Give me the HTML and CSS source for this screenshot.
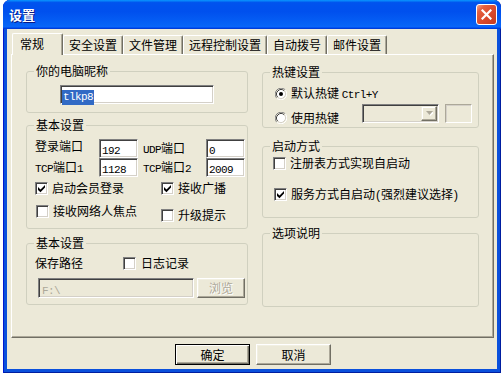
FILE: index.html
```html
<!DOCTYPE html>
<html>
<head>
<meta charset="utf-8">
<title>设置</title>
<link rel="stylesheet" href="styles.css">
</head>
<body>
<div class="win">
  <div class="titlebar">
    <span class="title">设置</span>
    <span class="close"><svg width="11" height="11" viewBox="0 0 11 11"><path d="M1.5 1.5L9.5 9.5M9.5 1.5L1.5 9.5" stroke="#fff" stroke-width="2.2" stroke-linecap="square"/></svg></span>
  </div>
  <div class="client">
    <div class="tabs">
      <div class="tab sel">常规</div>
      <div class="tab">安全设置</div>
      <div class="tab">文件管理</div>
      <div class="tab">远程控制设置</div>
      <div class="tab">自动拨号</div>
      <div class="tab">邮件设置</div>
    </div>
    <div class="panel">
      <div class="col col-l">
        <fieldset class="grp g-nick">
          <legend>你的电脑昵称</legend>
          <div class="edit nick"><span class="hl l">tlkp8</span></div>
        </fieldset>

        <fieldset class="grp g-basic">
          <legend>基本设置</legend>
          <div class="ports">
            <span class="plab up">登录端口</span>
            <div class="edit port"><span class="l">192</span></div>
            <span class="plab plab2"><span class="l">UDP</span>端口</span>
            <div class="edit port"><span class="l">0</span></div>
            <span class="plab"><span class="l">TCP</span>端口<span class="l">1</span></span>
            <div class="edit port"><span class="l">1128</span></div>
            <span class="plab plab2"><span class="l">TCP</span>端口<span class="l">2</span></span>
            <div class="edit port"><span class="l">2009</span></div>
          </div>
          <div class="crow r3">
            <div class="chk c-left"><span class="box"><svg width="11" height="11" viewBox="0 0 11 11"><path d="M2 4L2 7L4.5 9.3L9 4.6L9 2L4.5 6.5Z" fill="#000"/></svg></span>启动会员登录</div>
            <div class="chk"><span class="box"><svg width="11" height="11" viewBox="0 0 11 11"><path d="M2 4L2 7L4.5 9.3L9 4.6L9 2L4.5 6.5Z" fill="#000"/></svg></span>接收广播</div>
          </div>
          <div class="crow r4">
            <div class="chk c-left shift"><span class="box"></span>接收网络人焦点</div>
            <div class="chk low"><span class="box"></span>升级提示</div>
          </div>
        </fieldset>

        <fieldset class="grp g-save">
          <legend>基本设置</legend>
          <div class="srow">
            <span class="slab">保存路径</span>
            <div class="chk"><span class="box"></span>日志记录</div>
          </div>
          <div class="prow">
            <div class="edit path dis"><span class="l">F:\</span></div>
            <div class="btn dis-btn">浏览</div>
          </div>
        </fieldset>
      </div>

      <div class="col col-r">
        <fieldset class="grp g-hot">
          <legend>热键设置</legend>
          <div class="radio r1">
            <svg width="12" height="12" viewBox="0 0 12 12">
              <path d="M1.76 10.24A6 6 0 0 1 10.24 1.76" stroke="#808080" fill="none"/>
              <path d="M10.24 1.76A6 6 0 0 1 1.76 10.24" stroke="#fff" fill="none"/>
              <circle cx="6" cy="6" r="4.5" fill="#fff"/>
              <path d="M2.82 9.18A4.5 4.5 0 0 1 9.18 2.82" stroke="#404040" fill="none"/>
              <path d="M9.18 2.82A4.5 4.5 0 0 1 2.82 9.18" stroke="#d4d0c8" fill="none"/>
              <circle cx="6" cy="6" r="2" fill="#000"/>
            </svg>
            <span>默认热键 <span class="l">Ctrl+Y</span></span>
          </div>
          <div class="hrow">
            <div class="radio r2">
              <svg width="12" height="12" viewBox="0 0 12 12">
                <path d="M1.76 10.24A6 6 0 0 1 10.24 1.76" stroke="#808080" fill="none"/>
                <path d="M10.24 1.76A6 6 0 0 1 1.76 10.24" stroke="#fff" fill="none"/>
                <circle cx="6" cy="6" r="4.5" fill="#fff"/>
                <path d="M2.82 9.18A4.5 4.5 0 0 1 9.18 2.82" stroke="#404040" fill="none"/>
                <path d="M9.18 2.82A4.5 4.5 0 0 1 2.82 9.18" stroke="#d4d0c8" fill="none"/>
              </svg>
              <span>使用热键</span>
            </div>
            <div class="edit combo dis">
              <span class="arrow"><svg width="7" height="5" viewBox="0 0 7 5"><path d="M1 1h7l-3.5 4z" fill="#fff"/><path d="M0 0h7l-3.5 4z" fill="#aca899"/></svg></span>
            </div>
            <div class="keybox"></div>
          </div>
        </fieldset>

        <fieldset class="grp g-boot">
          <legend>启动方式</legend>
          <div class="chk b1"><span class="box"></span>注册表方式实现自启动</div>
          <div class="chk b2"><span class="box"><svg width="11" height="11" viewBox="0 0 11 11"><path d="M2 4L2 7L4.5 9.3L9 4.6L9 2L4.5 6.5Z" fill="#000"/></svg></span><span>服务方式自启动<span class="paren">(</span>强烈建议选择<span class="paren">)</span></span></div>
        </fieldset>

        <fieldset class="grp g-desc">
          <legend>选项说明</legend>
        </fieldset>
      </div>
    </div>
    <div class="btns">
      <div class="btn def">确定</div>
      <div class="btn">取消</div>
    </div>
  </div>
</div>
</body>
</html>
```

FILE: styles.css
```css
* { box-sizing: border-box; }

body {
  margin: 0;
  background: #ffffff;
  font-family: "Noto Sans CJK SC", "Noto Sans", sans-serif;
  font-size: 12px;
  color: #000;
}

.l {
  font-family: "Liberation Mono", "DejaVu Sans Mono", monospace;
  font-size: 11px;
  letter-spacing: -0.6px;
}

.paren {
  font-family: "Liberation Sans", sans-serif;
  font-size: 12px;
  display: inline-block;
  width: 6px;
  text-align: center;
}

.win {
  margin-left: 3px;
  width: 498px;
  height: 373px;
  background: #0a50dc;
  border-radius: 7px 7px 0 0;
  display: flex;
  flex-direction: column;
  box-shadow: inset 1px 0 #0019cf, inset -1px 0 #001ea0, inset 0 -1px #001ea0;
  overflow: hidden;
}

.titlebar {
  height: 29px;
  flex: none;
  display: flex;
  align-items: center;
  justify-content: space-between;
  padding: 0 4px 0 6px;
  border-radius: 7px 7px 0 0;
  background: linear-gradient(180deg, #0997ff 0%, #0053ee 9%, #0050ee 40%, #0663f6 86%, #0a66f8 92%, #005bff 94%, #003dd7 97%, #003dd7 100%);
}

.title {
  color: #fff;
  font-weight: 700;
  font-size: 13px;
  line-height: 15px;
  text-shadow: 1px 1px #0a1883;
}

.close {
  width: 21px;
  height: 21px;
  border: 1px solid #fff;
  border-radius: 3px;
  background: linear-gradient(135deg, #f3a690 0%, #e4603f 22%, #d9482b 60%, #c43c1f 100%);
  display: flex;
  align-items: center;
  justify-content: center;
}

.client {
  margin: 0 4px 4px;
  height: 340px;
  background: #ece9d8;
  padding-top: 4px;
  display: flex;
  flex-direction: column;
}

/* tabs */
.tabs {
  height: 21px;
  display: flex;
  align-items: flex-end;
  padding-left: 5px;
  position: relative;
  z-index: 1;
}

.tab {
  height: 19px;
  line-height: 18px;
  padding: 0 5px;
  background: #ece9d8;
  border-top: 1px solid #fff;
  border-left: 1px solid #fff;
  border-right: 1px solid #716f64;
  box-shadow: inset -1px 0 #aca899;
  border-radius: 2px 2px 0 0;
  white-space: nowrap;
}

.tab.sel {
  height: 22px;
  width: 51px;
  line-height: 19px;
  padding-left: 7px;
  margin-bottom: -1px;
}

.panel {
  margin-left: 4px;
  width: 483px;
  height: 284px;
  flex: none;
  border-top: 1px solid #fff;
  border-left: 1px solid #fff;
  border-right: 1px solid #716f64;
  border-bottom: 1px solid #716f64;
  box-shadow: inset -1px -1px #aca899;
  display: flex;
  gap: 14px;
  padding: 9px 0 0 14px;
}

.col { display: flex; flex-direction: column; }
.col-l { width: 222px; }
.col-r { width: 217px; margin-top: 1px; }

/* group boxes */
.grp {
  margin: 0;
  padding: 0;
  min-width: 0;
  border: 1px solid #d0d0bf;
  border-radius: 3px;
}

.grp legend {
  margin-left: 7px;
  padding: 0 2px;
  line-height: 14px;
  font-size: 12px;
}

.g-nick { height: 49px; }
.g-basic { height: 111px; margin-top: 5px; }
.g-save { height: 69px; margin-top: 7px; }
.g-hot { height: 63px; }
.g-boot { height: 79px; margin-top: 11px; }
.g-desc { height: 81px; margin-top: 8px; }

/* edits */
.edit {
  background: #fff;
  border: 1px solid;
  border-color: #808080 #fff #fff #808080;
  box-shadow: inset 1px 1px #404040, inset -1px -1px #d4d0c8;
  padding: 1px 2px;
  line-height: 15px;
  white-space: nowrap;
}

.edit.dis { background: #ece9d8; color: #aca899; }

.nick {
  width: 154px;
  height: 19px;
  margin: 7px 0 0 33px;
  padding: 1px 1px;
}

.hl {
  display: inline-block;
  background: #316ac5;
  color: #fff;
  line-height: 15px;
  padding: 0 1px;
}

.ports {
  margin: 7px 0 0 8px;
  display: grid;
  grid-template-columns: 64px 39px 68px 39px;
  grid-auto-rows: 19px;
}

.plab { align-self: center; line-height: 14px; white-space: nowrap; }
.plab.up { align-self: start; }
.plab2 { padding-left: 5px; }

.port { height: 19px; padding: 1px 2px; line-height: 16px; }

/* checkboxes */
.chk {
  display: flex;
  align-items: center;
  gap: 4px;
  line-height: 14px;
  white-space: nowrap;
}

.box {
  width: 13px;
  height: 13px;
  flex: none;
  background: #fff;
  border: 1px solid;
  border-color: #808080 #fff #fff #808080;
  box-shadow: inset 1px 1px #404040, inset -1px -1px #d4d0c8;
  display: flex;
}

.crow { display: flex; align-items: flex-start; margin-left: 8px; }
.c-left { width: 126px; }
.r3 { margin-top: 4px; }
.r4 { margin-top: 9px; }
.shift { margin-left: 1px; width: 125px; }
.low { margin-top: 4px; }

/* save */
.srow {
  display: flex;
  align-items: center;
  margin: 6px 0 0 8px;
  line-height: 14px;
}
.slab { width: 88px; }
.srow .chk { gap: 5px; }

.prow {
  display: flex;
  gap: 3px;
  margin: 8px 0 0 11px;
}

.path { width: 156px; height: 20px; padding: 2px 3px; }

/* buttons */
.btn {
  width: 75px;
  height: 21px;
  background: #ece9d8;
  border: 1px solid;
  border-color: #fff #716f64 #716f64 #fff;
  box-shadow: inset -1px -1px #aca899, inset 1px 1px #f1efe2;
  display: flex;
  align-items: center;
  justify-content: center;
  line-height: 14px;
}

.btn.def {
  border-color: #000;
  box-shadow: inset 1px 1px #fff, inset -1px -1px #716f64, inset -2px -2px #aca899;
}

.dis-btn {
  width: 48px;
  height: 20px;
  color: #aca899;
  text-shadow: 1px 1px #fff;
}

.btns {
  display: flex;
  justify-content: center;
  gap: 6px;
  margin-top: 6px;
  padding-left: 2px;
}

/* radios */
.radio {
  display: flex;
  align-items: center;
  gap: 4px;
  line-height: 14px;
  white-space: nowrap;
}
.radio svg { flex: none; }
.r1 { margin: 7px 0 0 12px; }

.hrow {
  display: flex;
  align-items: flex-start;
  margin: 2px 0 0 12px;
}
.r2 { margin-top: 7px; }

.combo {
  width: 77px;
  height: 19px;
  margin-left: 23px;
  padding: 1px;
  display: flex;
  justify-content: flex-end;
}

.arrow {
  width: 16px;
  height: 15px;
  background: #ece9d8;
  border: 1px solid;
  border-color: #f1efe2 #716f64 #716f64 #f1efe2;
  box-shadow: inset -1px -1px #aca899, inset 1px 1px #fff;
  display: flex;
  align-items: center;
  justify-content: center;
}

.keybox {
  width: 27px;
  height: 19px;
  margin-left: 6px;
  border: 1px solid;
  border-color: #aca899 #fff #fff #aca899;
  box-shadow: inset 1px 1px #d4d0c8;
}

/* boot */
.b1 { margin: 3px 0 0 10px; }
.b2 { margin: 17px 0 0 11px; gap: 4px; }
```
